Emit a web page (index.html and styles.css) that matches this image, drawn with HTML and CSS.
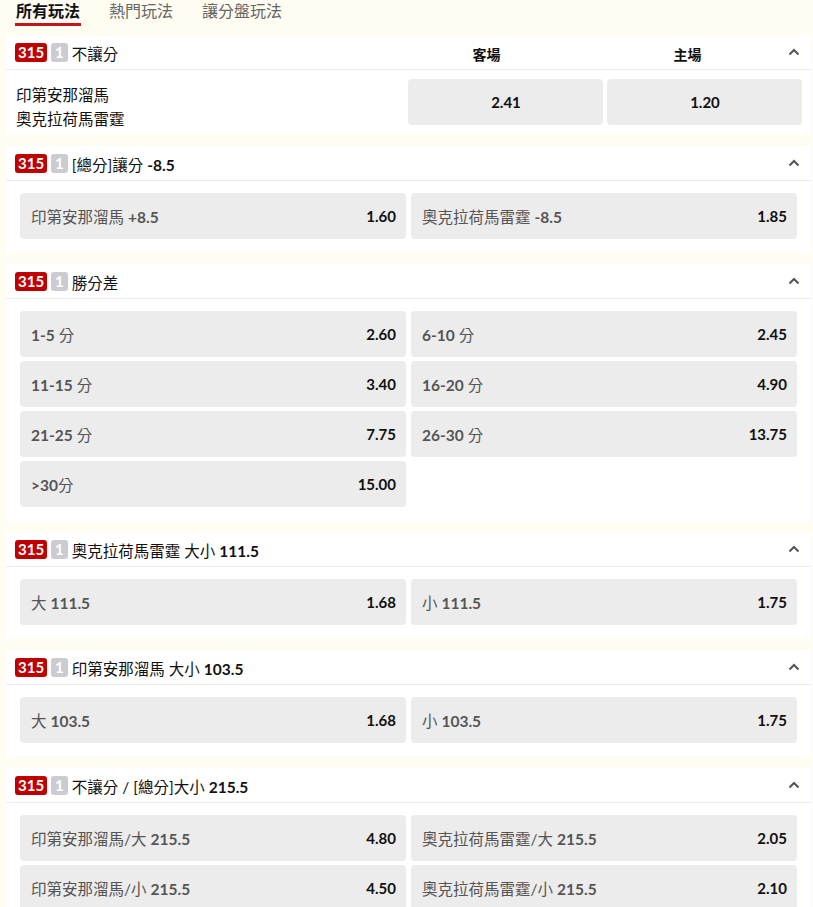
FILE: index.html
```html
<!DOCTYPE html>
<html lang="zh-Hant">
<head>
<meta charset="utf-8">
<link rel="stylesheet" href="styles.css">
</head>
<body>
<nav class="tabs">
  <a class="tab active">所有玩法</a>
  <a class="tab">熱門玩法</a>
  <a class="tab">讓分盤玩法</a>
</nav>

<section class="card">
  <header class="card-head">
    <span class="badge red">315</span><span class="badge grey">1</span>
    <span class="title">不讓分</span>
    <span class="cols"><span class="col">客場</span><span class="col">主場</span></span>
    <svg class="chev" width="12" height="8" viewBox="0 0 12 8"><polyline points="1.5,6.5 6,2 10.5,6.5" fill="none" stroke="#555" stroke-width="2"/></svg>
  </header>
  <div class="match-body">
    <div class="teams"><div>印第安那溜馬</div><div>奧克拉荷馬雷霆</div></div>
    <div class="odd center">2.41</div>
    <div class="odd center">1.20</div>
  </div>
</section>

<section class="card">
  <header class="card-head">
    <span class="badge red">315</span><span class="badge grey">1</span>
    <span class="title">[總分]讓分 <b>-8.5</b></span>
    <svg class="chev" width="12" height="8" viewBox="0 0 12 8"><polyline points="1.5,6.5 6,2 10.5,6.5" fill="none" stroke="#555" stroke-width="2"/></svg>
  </header>
  <div class="grid">
    <div class="odd"><span class="lbl">印第安那溜馬 <b>+8.5</b></span><span class="val">1.60</span></div>
    <div class="odd"><span class="lbl">奧克拉荷馬雷霆 <b>-8.5</b></span><span class="val">1.85</span></div>
  </div>
</section>

<section class="card">
  <header class="card-head">
    <span class="badge red">315</span><span class="badge grey">1</span>
    <span class="title">勝分差</span>
    <svg class="chev" width="12" height="8" viewBox="0 0 12 8"><polyline points="1.5,6.5 6,2 10.5,6.5" fill="none" stroke="#555" stroke-width="2"/></svg>
  </header>
  <div class="grid">
    <div class="odd"><span class="lbl"><b>1-5</b> 分</span><span class="val">2.60</span></div>
    <div class="odd"><span class="lbl"><b>6-10</b> 分</span><span class="val">2.45</span></div>
    <div class="odd"><span class="lbl"><b>11-15</b> 分</span><span class="val">3.40</span></div>
    <div class="odd"><span class="lbl"><b>16-20</b> 分</span><span class="val">4.90</span></div>
    <div class="odd"><span class="lbl"><b>21-25</b> 分</span><span class="val">7.75</span></div>
    <div class="odd"><span class="lbl"><b>26-30</b> 分</span><span class="val">13.75</span></div>
    <div class="odd"><span class="lbl"><b>&gt;30</b>分</span><span class="val">15.00</span></div>
  </div>
</section>

<section class="card">
  <header class="card-head">
    <span class="badge red">315</span><span class="badge grey">1</span>
    <span class="title">奧克拉荷馬雷霆 大小 <b>111.5</b></span>
    <svg class="chev" width="12" height="8" viewBox="0 0 12 8"><polyline points="1.5,6.5 6,2 10.5,6.5" fill="none" stroke="#555" stroke-width="2"/></svg>
  </header>
  <div class="grid">
    <div class="odd"><span class="lbl">大 <b>111.5</b></span><span class="val">1.68</span></div>
    <div class="odd"><span class="lbl">小 <b>111.5</b></span><span class="val">1.75</span></div>
  </div>
</section>

<section class="card">
  <header class="card-head">
    <span class="badge red">315</span><span class="badge grey">1</span>
    <span class="title">印第安那溜馬 大小 <b>103.5</b></span>
    <svg class="chev" width="12" height="8" viewBox="0 0 12 8"><polyline points="1.5,6.5 6,2 10.5,6.5" fill="none" stroke="#555" stroke-width="2"/></svg>
  </header>
  <div class="grid">
    <div class="odd"><span class="lbl">大 <b>103.5</b></span><span class="val">1.68</span></div>
    <div class="odd"><span class="lbl">小 <b>103.5</b></span><span class="val">1.75</span></div>
  </div>
</section>

<section class="card">
  <header class="card-head">
    <span class="badge red">315</span><span class="badge grey">1</span>
    <span class="title">不讓分 / [總分]大小 <b>215.5</b></span>
    <svg class="chev" width="12" height="8" viewBox="0 0 12 8"><polyline points="1.5,6.5 6,2 10.5,6.5" fill="none" stroke="#555" stroke-width="2"/></svg>
  </header>
  <div class="grid">
    <div class="odd"><span class="lbl">印第安那溜馬/大 <b>215.5</b></span><span class="val">4.80</span></div>
    <div class="odd"><span class="lbl">奧克拉荷馬雷霆/大 <b>215.5</b></span><span class="val">2.05</span></div>
    <div class="odd"><span class="lbl">印第安那溜馬/小 <b>215.5</b></span><span class="val">4.50</span></div>
    <div class="odd"><span class="lbl">奧克拉荷馬雷霆/小 <b>215.5</b></span><span class="val">2.10</span></div>
  </div>
</section>
</body>
</html>
```

FILE: styles.css
```css
* { box-sizing: border-box; }
html, body { margin: 0; padding: 0; }
body {
  background: #fffcf2;
  font-family: "Lato", "Noto Sans CJK TC", sans-serif;
  color: #111;
  width: 813px;
  overflow: hidden;
}
.tabs {
  display: flex;
  gap: 27px;
  padding: 0 0 0 15px;
  height: 35px;
}
.tab {
  font-size: 16px;
  line-height: 22px;
  color: #666;
  padding: 0 1px;
  height: 26px;
  border-bottom: 3px solid transparent;
}
.tab.active {
  color: #111;
  font-weight: 700;
  border-bottom-color: #c3161c;
}
.card {
  background: #fff;
  margin: 0 2px 11px 6px;
}
.card:last-child { margin-bottom: 0; }
.card-head {
  height: 35px;
  border-bottom: 1px solid #ececf2;
  display: flex;
  align-items: center;
  padding: 1px 11px 0 9px;
}
.badge {
  display: inline-block;
  height: 19px;
  line-height: 19px;
  font-size: 15px;
  font-weight: 700;
  color: #fff;
  border-radius: 3px;
  padding: 0 3px;
  margin-right: 4px;
}
.badge.red { background: #bf0000; }
.badge.grey { background: #cbcbd2; padding: 0 4px; }
.title {
  font-size: 15.5px;
  margin-left: 0;
  flex: 1;
}
.title b { font-weight: 700; }
.cols {
  display: flex;
  width: 398px;
  margin-right: 2px;
  gap: 4px;
  padding-top: 3px;
}
.col {
  flex: 1;
  text-align: center;
  font-size: 14px;
  font-weight: 700;
}
.chev { display: block; margin-left: 0; margin-top: -1px; }
.match-body {
  display: grid;
  grid-template-columns: 1fr 195px 195px;
  gap: 4px;
  padding: 9px 9px 8px 10px;
}
.teams {
  font-size: 15.5px;
  line-height: 24px;
  align-self: center;
  margin: 4px 0 -4px 0;
}
.grid {
  display: grid;
  grid-template-columns: 1fr 1fr;
  gap: 4px 5px;
  padding: 12px 14px 14px 14px;
}
.odd {
  background: #ececec;
  border-radius: 4px;
  height: 46px;
  display: flex;
  align-items: center;
  justify-content: space-between;
  padding: 0 10px 0 11px;
  font-size: 15.5px;
}
.odd.center {
  justify-content: center;
  font-weight: 700;
  font-size: 15px;
}
.lbl { color: #555; }
.lbl b { font-weight: 700; color: #555; }
.val { font-weight: 700; font-size: 15px; color: #111; }
```
